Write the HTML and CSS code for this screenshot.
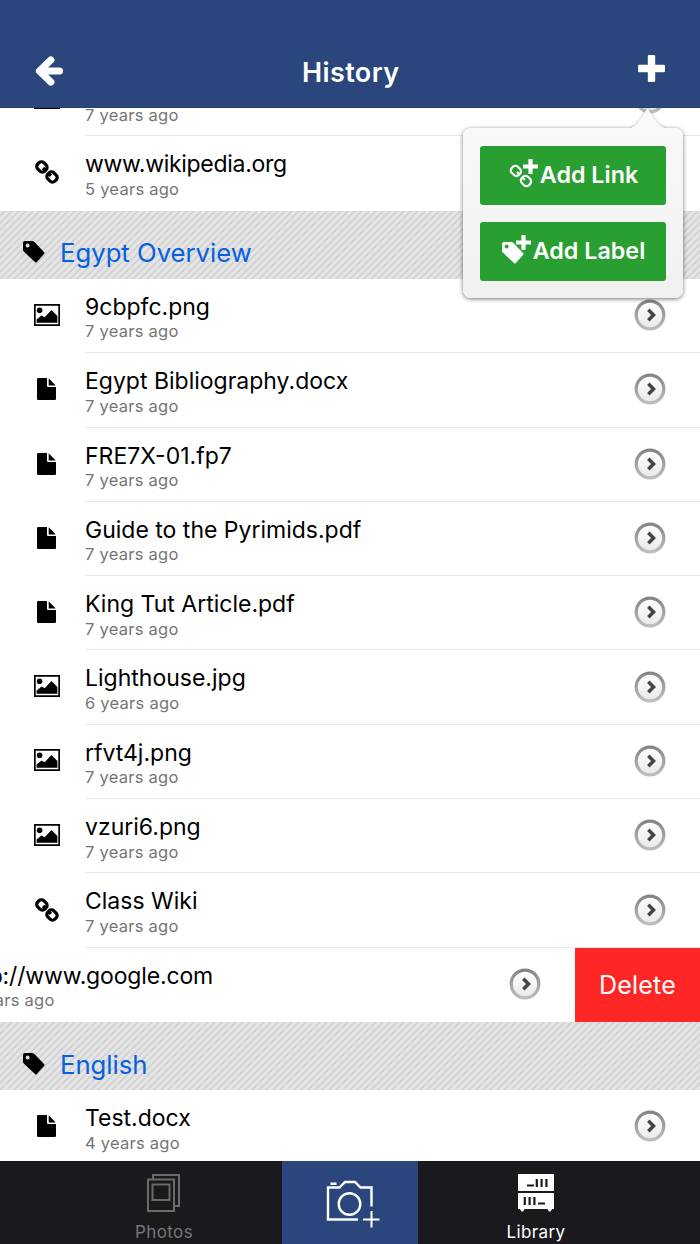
FILE: index.html
```html
<!DOCTYPE html>
<html lang="en">
<head>
    <meta charset="UTF-8">
    <meta name="viewport" content="width=device-width, initial-scale=1.0">
    <title>History</title>
    <link rel="stylesheet" href="styles.css">
</head>
<body>

    <!-- Shared icons -->
    <svg class="sprite" width="0" height="0">
        <defs>
            <linearGradient id="ring" x1="0" y1="0" x2="0" y2="1">
                <stop offset="0" stop-color="#858585"/>
                <stop offset="1" stop-color="#bdbdbd"/>
            </linearGradient>
            <linearGradient id="disc" x1="0" y1="0" x2="0" y2="1">
                <stop offset="0" stop-color="#ffffff"/>
                <stop offset="1" stop-color="#e9e9e9"/>
            </linearGradient>
        </defs>
        <symbol id="link" viewBox="0 0 24 24">
            <g fill="none" stroke="currentColor">
                <rect x="-5" y="-4.300" width="10" height="8.600" rx="3.400" transform="translate(6.900 6.900) rotate(45)"/>
                <rect x="-5" y="-4.300" width="10" height="8.600" rx="3.400" transform="translate(17 17) rotate(45)"/>
                <path d="M8 8l2.500 2.500M13.400 13.400l2.500 2.500"/>
            </g>
        </symbol>
        <symbol id="tag" viewBox="0 0 22 22">
            <path fill="currentColor" fill-rule="evenodd" d="M2 0h7.2a3 3 0 0 1 2 .8l10 10.4a1.2 1.2 0 0 1 0 1.6L13.8 21a1.2 1.2 0 0 1-1.8 0L.8 10.6A2.500 2.500 0 0 1 0 9V2a2 2 0 0 1 2-2zM4.600 2.500a2 2 0 1 0 0 4 2 2 0 1 0 0-4z"/>
        </symbol>
        <symbol id="image" viewBox="0 0 26 22">
            <path fill="none" stroke="currentColor" stroke-width="1.8" d="M.8.8h24.400v20.400H.8z"/>
            <circle cx="5.600" cy="6.200" r="2.800" fill="currentColor"/>
            <path fill="currentColor" d="M2.600 18.800v-3.400l5-4 3 1.800 6.900-7.200 5.900 6v6.800z"/>
        </symbol>
        <symbol id="file" viewBox="0 0 20 22">
            <path fill="currentColor" d="M1.200 0H10v7.700a1.300 1.300 0 0 0 1.300 1.300H19v11.800a1.200 1.200 0 0 1-1.200 1.200H1.200A1.200 1.200 0 0 1 0 20.800V1.200A1.200 1.200 0 0 1 1.200 0zM11.700.2l7 7.200h-7z"/>
        </symbol>
        <symbol id="go" viewBox="0 0 32 32">
            <circle cx="16" cy="16" r="13.800" fill="url(#disc)" stroke="url(#ring)" stroke-width="3.200"/>
            <path fill="none" stroke="#444" stroke-width="3.500" d="M14.300 10.800l5.200 5.200-5.200 5.200"/>
        </symbol>
    </svg>

    <header class="topbar">
        <svg class="back" viewBox="0 0 28 30"><path fill="none" stroke="#fff" stroke-width="7.200" stroke-linecap="round" stroke-linejoin="round" d="M15.800 4L4.500 15l11.300 11M6 15h18.500"/></svg>
        <h1>History</h1>
        <svg class="add" viewBox="0 0 27 27"><path fill="#fff" d="M11 0h5a1.200 1.200 0 0 1 1.200 1.200v8.600h8.600A1.200 1.200 0 0 1 27 11v5a1.200 1.200 0 0 1-1.200 1.200h-8.600v8.600A1.200 1.200 0 0 1 16 27h-5a1.200 1.200 0 0 1-1.200-1.200v-8.600H1.200A1.200 1.200 0 0 1 0 16v-5a1.200 1.200 0 0 1 1.200-1.200h8.600V1.200A1.200 1.200 0 0 1 11 0z"/></svg>
    </header>

    <main class="list">
        <div class="row">
            <svg class="icon image"><use href="#image"/></svg>
            <div class="info"><p class="name">&nbsp;</p><p class="age">7 years ago</p></div>
            <svg class="go"><use href="#go"/></svg>
        </div>
        <div class="row last">
            <svg class="icon link"><use href="#link"/></svg>
            <div class="info"><p class="name url">www.wikipedia.org</p><p class="age">5 years ago</p></div>
            <svg class="go"><use href="#go"/></svg>
        </div>

        <h2 class="label"><svg class="tag"><use href="#tag"/></svg>Egypt Overview</h2>
        <div class="row">
            <svg class="icon image"><use href="#image"/></svg>
            <div class="info"><p class="name">9cbpfc.png</p><p class="age">7 years ago</p></div>
            <svg class="go"><use href="#go"/></svg>
        </div>
        <div class="row">
            <svg class="icon file"><use href="#file"/></svg>
            <div class="info"><p class="name">Egypt Bibliography.docx</p><p class="age">7 years ago</p></div>
            <svg class="go"><use href="#go"/></svg>
        </div>
        <div class="row">
            <svg class="icon file"><use href="#file"/></svg>
            <div class="info"><p class="name">FRE7X-01.fp7</p><p class="age">7 years ago</p></div>
            <svg class="go"><use href="#go"/></svg>
        </div>
        <div class="row">
            <svg class="icon file"><use href="#file"/></svg>
            <div class="info"><p class="name">Guide to the Pyrimids.pdf</p><p class="age">7 years ago</p></div>
            <svg class="go"><use href="#go"/></svg>
        </div>
        <div class="row">
            <svg class="icon file"><use href="#file"/></svg>
            <div class="info"><p class="name">King Tut Article.pdf</p><p class="age">7 years ago</p></div>
            <svg class="go"><use href="#go"/></svg>
        </div>
        <div class="row">
            <svg class="icon image"><use href="#image"/></svg>
            <div class="info"><p class="name">Lighthouse.jpg</p><p class="age">6 years ago</p></div>
            <svg class="go"><use href="#go"/></svg>
        </div>
        <div class="row">
            <svg class="icon image"><use href="#image"/></svg>
            <div class="info"><p class="name">rfvt4j.png</p><p class="age">7 years ago</p></div>
            <svg class="go"><use href="#go"/></svg>
        </div>
        <div class="row">
            <svg class="icon image"><use href="#image"/></svg>
            <div class="info"><p class="name">vzuri6.png</p><p class="age">7 years ago</p></div>
            <svg class="go"><use href="#go"/></svg>
        </div>
        <div class="row">
            <svg class="icon link"><use href="#link"/></svg>
            <div class="info"><p class="name">Class Wiki</p><p class="age">7 years ago</p></div>
            <svg class="go"><use href="#go"/></svg>
        </div>
        <!-- Row swiped left to show Delete -->
        <div class="row swiped">
            <div class="info"><p class="name url">http://www.google.com</p><p class="age">7 years ago</p></div>
            <svg class="go"><use href="#go"/></svg>
            <button class="delete">Delete</button>
        </div>

        <h2 class="label"><svg class="tag"><use href="#tag"/></svg>English</h2>
        <div class="row last">
            <svg class="icon file"><use href="#file"/></svg>
            <div class="info"><p class="name">Test.docx</p><p class="age">4 years ago</p></div>
            <svg class="go"><use href="#go"/></svg>
        </div>
    </main>

    <!-- Add menu -->
    <div class="popover">
        <svg class="arrow" viewBox="0 0 40 21"><path fill="#f9f9f9" d="M0 21C8 19 12 12 18.500 1.500q1-1.500 2 0C27 12 31 19 40 21z"/></svg>
        <button class="popover-button">
            <svg class="button-icon" viewBox="0 0 30 30">
                <svg x="0" y="5" width="24" height="24" stroke-width="2.200"><use href="#link"/></svg>
                <path stroke="#299f32" stroke-width="8" d="M21.500 1v13"/>
                <path stroke="#fff" stroke-width="4.200" d="M21.500 0v15M14 7.500h15"/>
            </svg>Add Link
        </button>
        <button class="popover-button">
            <svg class="button-icon" viewBox="0 0 30 30">
                <svg x="0" y="7" width="22" height="22"><use href="#tag"/></svg>
                <path stroke="#fff" stroke-width="4.200" d="M21.500 0v15M14 7.500h15"/>
            </svg>Add Label
        </button>
    </div>

    <nav class="tabbar">
        <a class="tab photos">
            <svg width="34" height="38" viewBox="0 0 34 38" fill="none" stroke="#6b6b6b" stroke-width="2">
                <path d="M6 5.500V1h26v31h-4.500M1 5.500h26V37H1zM5.500 10.500h17V26h-17z"/>
            </svg>
            Photos
        </a>
        <a class="tab camera">
            <svg width="54" height="48" viewBox="0 0 54 48" fill="none" stroke="#fff" stroke-width="2.400">
                <path d="M32 39.500H2V7.500h11.500L19 2h10l5.500 5.500H45.500v19M4.500 3.700h6"/>
                <circle cx="23.500" cy="24" r="10.800"/>
                <path stroke-width="2" d="M45.500 31v16.500M37 39.500h16.500"/>
            </svg>
        </a>
        <a class="tab library">
            <svg width="36" height="38" viewBox="0 0 36 38">
                <path fill="#fff" d="M1 0h34a1 1 0 0 1 1 1v16H0V1a1 1 0 0 1 1-1zM0 19h36v16h-2l-1.500 2.500h-1.500L29.500 35h-23L5 37.500H3.500L2 35H0z"/>
                <path stroke="#1a1a1e" stroke-width="2.200" d="M9 11.500h7M18.800 5v8M23.600 5v8M28.400 5v8M6.800 23v8M11.600 23v8M16.400 23v8M20 29.500h7"/>
            </svg>
            Library
        </a>
    </nav>

</body>
</html>
```
FILE: styles.css
```css
* {
    box-sizing: border-box;
}
body {
    margin: 0;
    height: 1244px;
    display: flex;
    flex-direction: column;
    overflow: hidden;
    position: relative;
    background-color: #fff;
    font-family: Inter, "Liberation Sans", sans-serif;
    color: #000;
}
h1, h2, p {
    margin: 0;
    font-weight: 400;
}
button {
    border: none;
    padding: 0;
    font-family: inherit;
    color: #fff;
}
.sprite {
    position: absolute;
}

/* Header */
.topbar {
    flex: none;
    height: 108.400px;
    padding: 37px 34.500px 0 35px;
    display: flex;
    align-items: center;
    justify-content: space-between;
    background-color: #2a467c;
    border-bottom: 1px solid #24406f;
    color: #fff;
}
.topbar h1 {
    font-size: 27px;
    font-weight: 600;
    letter-spacing: 0.400px;
}
.back {
    width: 28px;
    height: 30px;
    margin-bottom: 3px;
}
.add {
    width: 27px;
    height: 27px;
    margin-bottom: 7px;
}

/* List */
.list {
    flex: 1;
    min-height: 0;
    overflow: hidden;
}
.list .row:first-child {
    margin-top: -46.400px;
}
.row {
    height: 74.300px;
    display: flex;
    align-items: center;
    padding-right: 34px;
}
.icon {
    flex: none;
    margin: 0 25px 3px 34px;
}
.icon.image {
    width: 26px;
    height: 22px;
}
.icon.file {
    width: 20px;
    height: 22px;
    margin: 0 28px 2px 37px;
}
.icon.link {
    width: 24px;
    height: 24px;
    margin: 0 26px 2px 35px;
    stroke-width: 3.200;
}
.info {
    flex: 1;
    align-self: stretch;
    padding-top: 13px;
    border-bottom: 1px solid #e8e8ea;
    margin-right: -66px;
}
.last .info, .swiped .info {
    border-bottom: none;
}
.name {
    font-size: 23px;
    line-height: 30px;
    white-space: nowrap;
}
.url {
    letter-spacing: -0.300px;
}
.age {
    margin-top: -0.500px;
    font-size: 16.500px;
    line-height: 20px;
    letter-spacing: 0.250px;
    color: #757575;
}
.go {
    flex: none;
    width: 32px;
    height: 32px;
    margin-bottom: 2px;
    overflow: visible;
}
.swiped {
    padding-right: 0;
    justify-content: flex-end;
    overflow: hidden;
}
.swiped .info {
    flex: none;
    width: 548px;
    margin-right: 0;
}
.swiped .url {
    letter-spacing: -0.150px;
}
.delete {
    flex: none;
    width: 125px;
    height: 100%;
    margin-left: 34px;
    background-color: #fe2725;
    font-size: 25px;
    letter-spacing: 0.200px;
}
.label {
    height: 68.400px;
    padding: 16px 23px 0;
    display: flex;
    align-items: center;
    font-size: 25.700px;
    color: #0660e0;
    background: repeating-linear-gradient(135deg, #e5e5e5 0, #e3e3e3 2.200px, #cdcdcd 3.500px, #e5e5e5 4.950px);
}
.tag {
    width: 22px;
    height: 22px;
    margin: 0 15px 1px 0;
    color: #000;
}

/* Add menu */
.popover {
    position: absolute;
    top: 128px;
    left: 463px;
    width: 220px;
    height: 170px;
    padding: 17.500px 17px;
    display: flex;
    flex-direction: column;
    gap: 17px;
    border-radius: 8px;
    background: linear-gradient(#f9f9f9, #f0f0f0);
    box-shadow: 0 1px 4px rgba(0, 0, 0, 0.550);
}
.arrow {
    position: absolute;
    top: -20px;
    left: 165px;
    width: 40px;
    height: 21px;
    filter: drop-shadow(0 -1px 1px rgba(0, 0, 0, 0.200));
    clip-path: inset(0 0 0 0);
}
.popover-button {
    height: 59px;
    padding: 0 0 1px 1px;
    display: flex;
    align-items: center;
    justify-content: center;
    border-radius: 3px;
    background-color: #299f32;
    font-size: 23.300px;
    font-weight: 600;
}
.button-icon {
    width: 30px;
    height: 30px;
    margin: -2px 1px 0 0;
}

/* Bottom tabs */
.tabbar {
    flex: none;
    height: 83.500px;
    display: flex;
    justify-content: center;
    background-color: #1a1a1e;
    font-size: 17px;
    letter-spacing: 0.400px;
    color: #fff;
}
.tab {
    width: 236px;
    padding-top: 13px;
    display: flex;
    flex-direction: column;
    align-items: center;
    gap: 10px;
}
.photos {
    color: #777;
}
.camera {
    width: 136px;
    padding: 19px 0 0 6px;
    background-color: #2a467c;
}
```
